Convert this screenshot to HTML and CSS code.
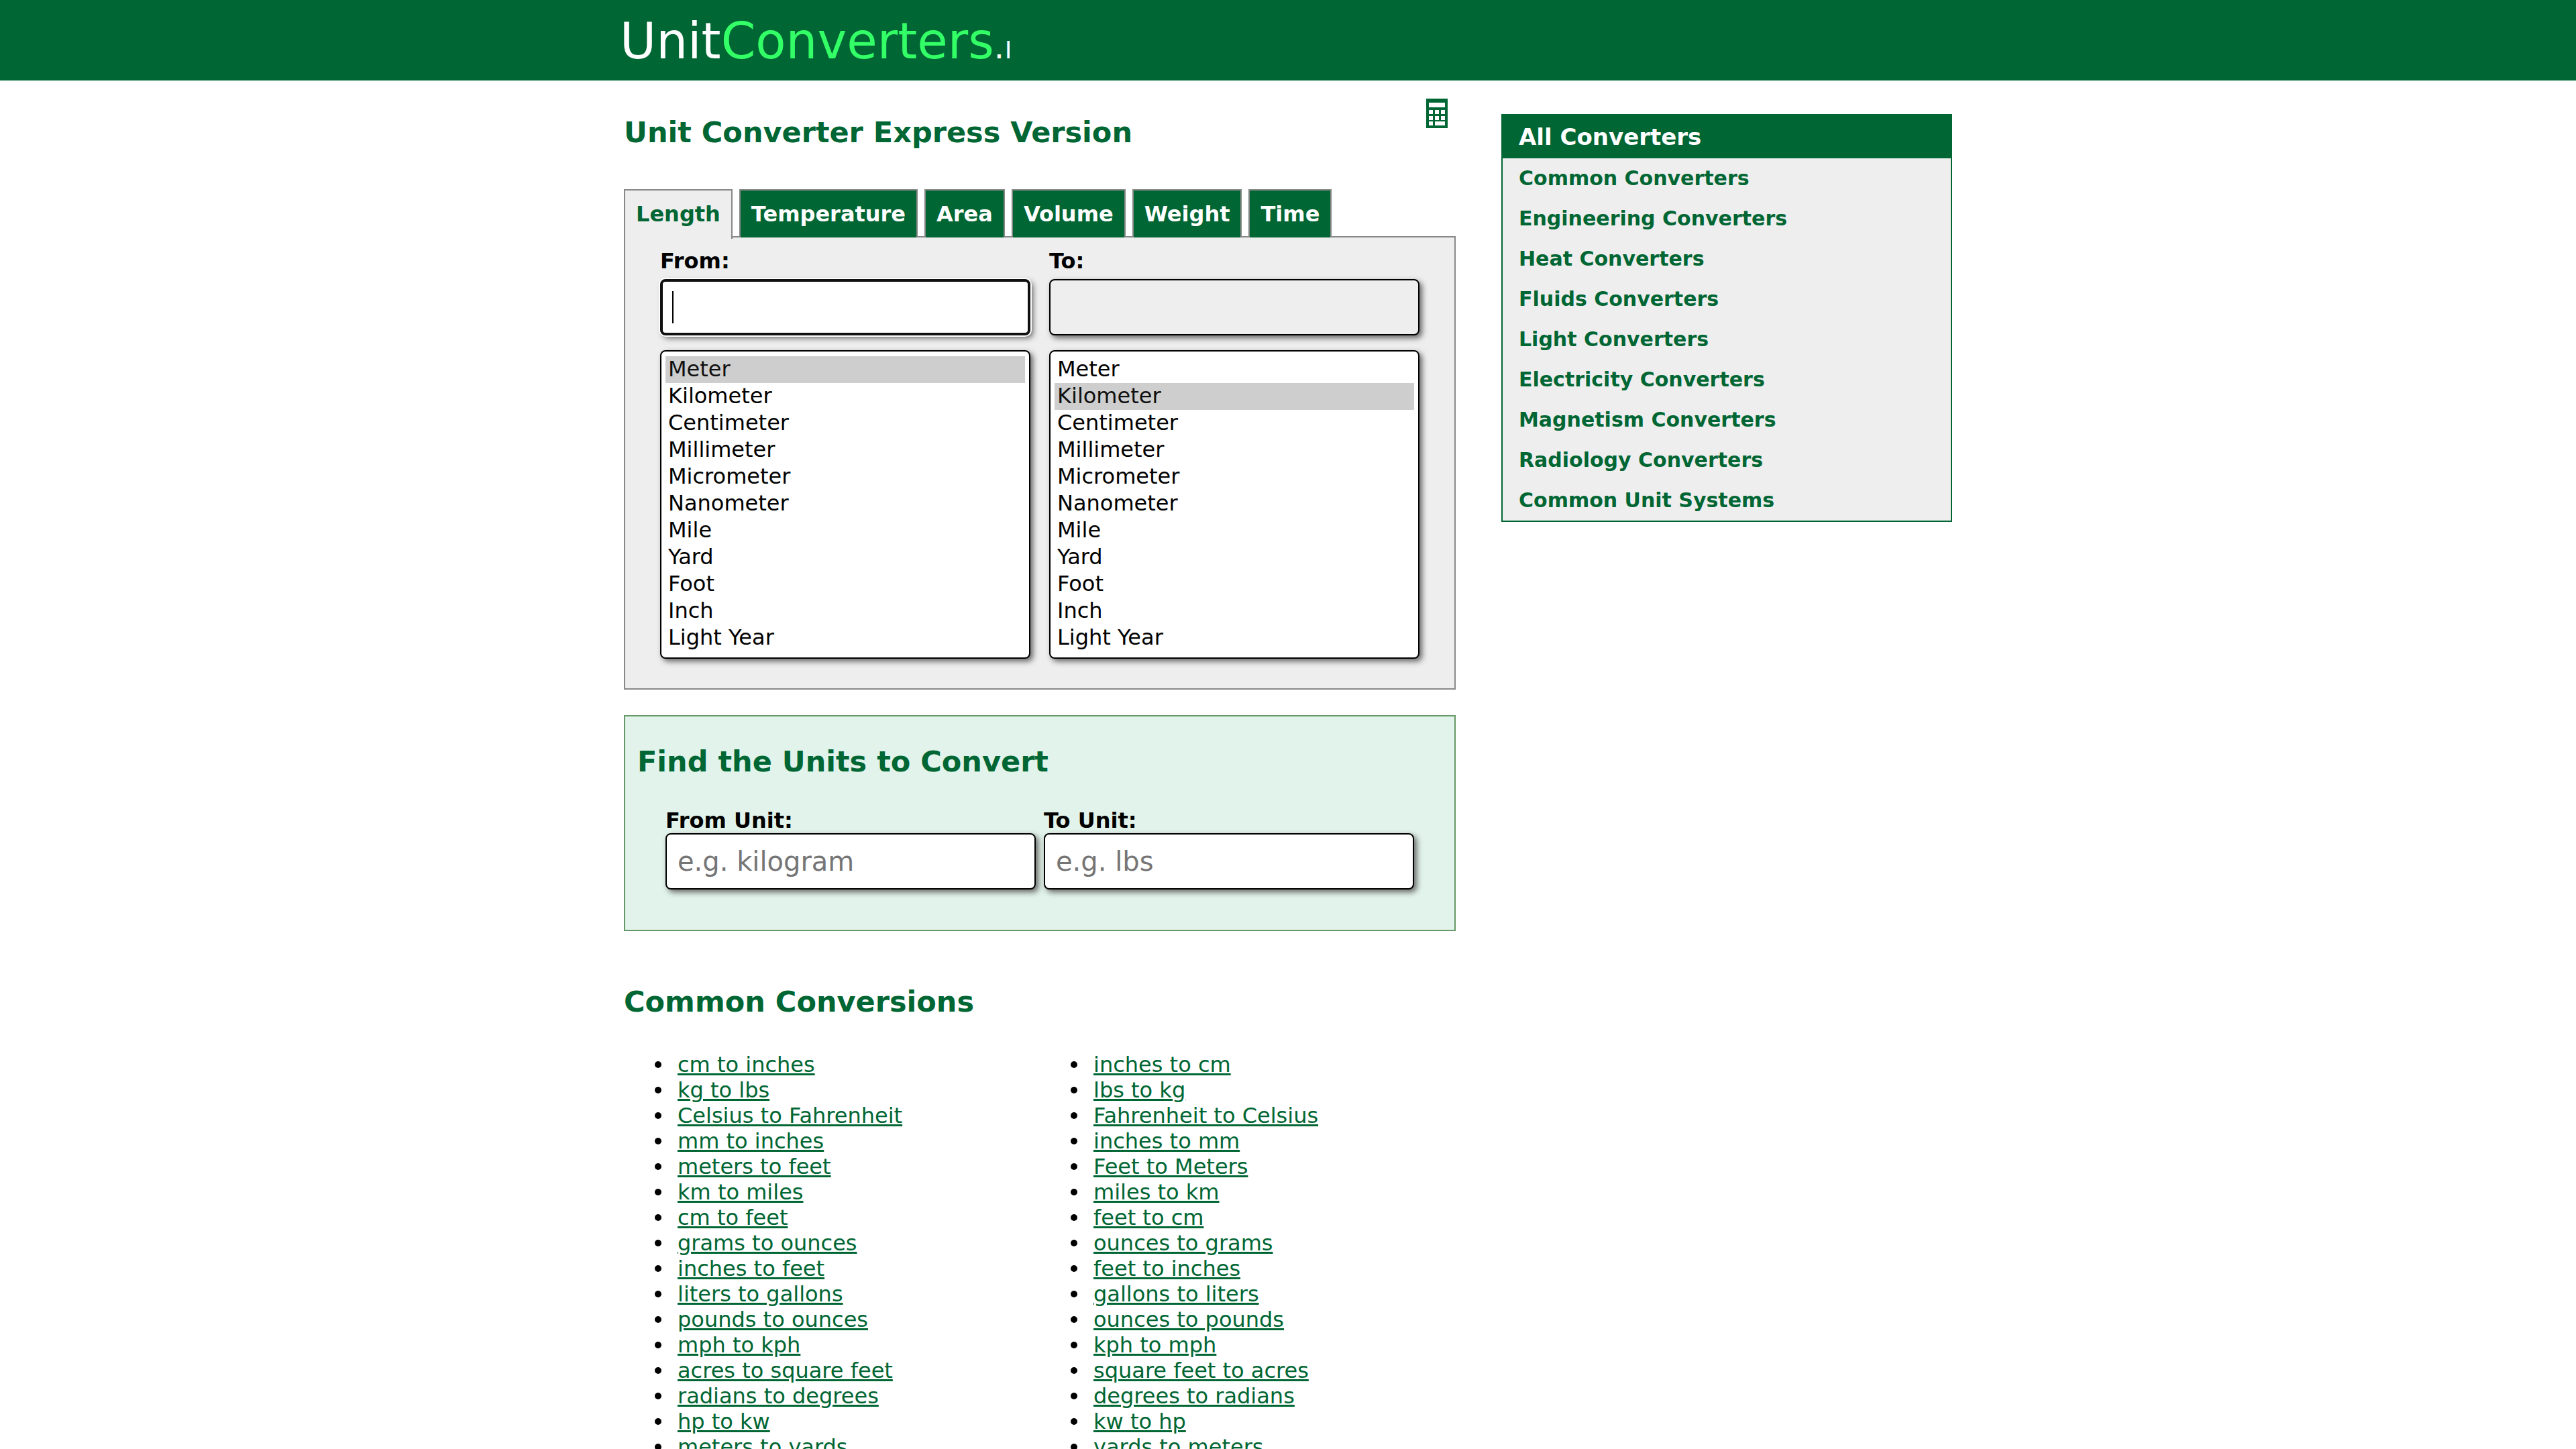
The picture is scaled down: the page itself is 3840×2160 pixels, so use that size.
FILE: index.html
```html
<!DOCTYPE html>
<html lang="en">
<head>
<meta charset="utf-8">
<title>Unit Converter</title>
<link rel="stylesheet" href="styles.css">
</head>
<body>
<header class="site-header">
  <div class="container">
    <a class="logo" href="#">Unit<span class="logo-accent">Converters</span><span class="logo-suffix">.n</span></a>
  </div>
</header>
<div class="container layout">
  <main class="main">
    <div class="title-row">
      <h1 class="heading">Unit Converter Express Version</h1>
      <a class="calc-link" href="#" aria-label="Calculator">
        <svg class="calc-icon" viewBox="0 0 32 44" aria-hidden="true">
          <path fill="#006633" d="M0 0h32v44H0z"/>
          <path fill="#fff" d="M4 6h24v7H4zM4 17h6v6H4zM13 17h6v6h-6zM22 17h6v6h-6zM4 26h6v6H4zM13 26h6v6h-6zM22 26h6v6h-6zM4 34h6v6H4zM13 34h15v6H13z"/>
        </svg>
      </a>
    </div>
    <nav class="tabs">
      <a class="tab tab-active" href="#">Length</a>
      <a class="tab" href="#">Temperature</a>
      <a class="tab" href="#">Area</a>
      <a class="tab" href="#">Volume</a>
      <a class="tab" href="#">Weight</a>
      <a class="tab" href="#">Time</a>
    </nav>
    <form class="converter">
      <div class="field">
        <label class="label" for="from-value">From:</label>
        <input class="box text-box text-box-current" id="from-value" type="text">
        <select class="box unit-list" size="11" aria-label="From unit">
          <option selected>Meter</option><option>Kilometer</option><option>Centimeter</option><option>Millimeter</option><option>Micrometer</option><option>Nanometer</option><option>Mile</option><option>Yard</option><option>Foot</option><option>Inch</option><option>Light Year</option>
        </select>
      </div>
      <div class="field">
        <label class="label" for="to-value">To:</label>
        <input class="box text-box text-box-result" id="to-value" type="text" readonly>
        <select class="box unit-list" size="11" aria-label="To unit">
          <option>Meter</option><option selected>Kilometer</option><option>Centimeter</option><option>Millimeter</option><option>Micrometer</option><option>Nanometer</option><option>Mile</option><option>Yard</option><option>Foot</option><option>Inch</option><option>Light Year</option>
        </select>
      </div>
    </form>
    <section class="finder">
      <h2 class="heading">Find the Units to Convert</h2>
      <form class="finder-form">
        <div class="field">
          <label class="label" for="find-from">From Unit:</label>
          <input class="box text-box" id="find-from" type="text" placeholder="e.g. kilogram">
        </div>
        <div class="field">
          <label class="label" for="find-to">To Unit:</label>
          <input class="box text-box" id="find-to" type="text" placeholder="e.g. lbs">
        </div>
      </form>
    </section>
    <section class="common">
      <h2 class="heading">Common Conversions</h2>
      <div class="link-columns">
        <ul class="link-list">
          <li><a href="#">cm to inches</a></li>
          <li><a href="#">kg to lbs</a></li>
          <li><a href="#">Celsius to Fahrenheit</a></li>
          <li><a href="#">mm to inches</a></li>
          <li><a href="#">meters to feet</a></li>
          <li><a href="#">km to miles</a></li>
          <li><a href="#">cm to feet</a></li>
          <li><a href="#">grams to ounces</a></li>
          <li><a href="#">inches to feet</a></li>
          <li><a href="#">liters to gallons</a></li>
          <li><a href="#">pounds to ounces</a></li>
          <li><a href="#">mph to kph</a></li>
          <li><a href="#">acres to square feet</a></li>
          <li><a href="#">radians to degrees</a></li>
          <li><a href="#">hp to kw</a></li>
          <li><a href="#">meters to yards</a></li>
        </ul>
        <ul class="link-list">
          <li><a href="#">inches to cm</a></li>
          <li><a href="#">lbs to kg</a></li>
          <li><a href="#">Fahrenheit to Celsius</a></li>
          <li><a href="#">inches to mm</a></li>
          <li><a href="#">Feet to Meters</a></li>
          <li><a href="#">miles to km</a></li>
          <li><a href="#">feet to cm</a></li>
          <li><a href="#">ounces to grams</a></li>
          <li><a href="#">feet to inches</a></li>
          <li><a href="#">gallons to liters</a></li>
          <li><a href="#">ounces to pounds</a></li>
          <li><a href="#">kph to mph</a></li>
          <li><a href="#">square feet to acres</a></li>
          <li><a href="#">degrees to radians</a></li>
          <li><a href="#">kw to hp</a></li>
          <li><a href="#">yards to meters</a></li>
        </ul>
      </div>
    </section>
  </main>
  <aside class="sidebar">
    <h2 class="sidebar-title">All Converters</h2>
    <nav class="sidebar-nav">
      <a href="#">Common Converters</a>
      <a href="#">Engineering Converters</a>
      <a href="#">Heat Converters</a>
      <a href="#">Fluids Converters</a>
      <a href="#">Light Converters</a>
      <a href="#">Electricity Converters</a>
      <a href="#">Magnetism Converters</a>
      <a href="#">Radiology Converters</a>
      <a href="#">Common Unit Systems</a>
    </nav>
  </aside>
</div>
</body>
</html>
```
FILE: styles.css
```css
* {
  box-sizing: border-box;
}

html {
  overflow-x: hidden;
  scrollbar-width: none;
}

body {
  margin: 0;
  background: #fff;
  color: #000;
  font-family: "DejaVu Sans", Verdana, sans-serif;
  font-size: 32px;
  line-height: 38px;
}

.container {
  max-width: 1980px;
  margin: 0 auto;
}

.site-header {
  background: #006633;
}

.logo {
  display: block;
  width: 581px;
  margin-left: -6px;
  padding-top: 2px;
  overflow: hidden;
  color: #fff;
  font-size: 74px;
  line-height: 118px;
  text-decoration: none;
  white-space: nowrap;
}

.logo-accent {
  color: #33ff66;
}

.logo-suffix {
  font-size: 48px;
  line-height: 48px;
}

.layout {
  display: grid;
  grid-template-columns: minmax(0, 1240fr) minmax(0, 672fr);
  column-gap: 68px;
  align-items: start;
}

.heading {
  margin: 0;
  color: #006633;
  font-size: 43px;
  line-height: 50px;
}

.title-row {
  display: flex;
  justify-content: space-between;
  align-items: flex-start;
  padding: 27px 12px 60px 0;
}

.title-row .heading {
  padding-top: 25px;
}

.calc-icon {
  display: block;
  width: 32px;
  height: 44px;
}

.tabs {
  display: flex;
  align-items: flex-start;
  gap: 10px;
  margin-bottom: -2px;
}

.tab {
  position: relative;
  padding: 16px;
  border: 2px solid #888;
  border-bottom: 0;
  background: #006633;
  color: #fff;
  font-weight: bold;
  text-decoration: none;
}

.tab-active {
  padding-bottom: 18px;
  margin-bottom: -2px;
  background: #eee;
  color: #006633;
}

.converter {
  display: grid;
  grid-template-columns: 1fr 1fr;
  column-gap: 28px;
  padding: 16px 52px 44px;
  border: 2px solid #888;
  background: #eee;
}

.field {
  display: flex;
  flex-direction: column;
}

.label {
  font-weight: bold;
}

.box {
  width: 100%;
  border: 2px solid #000;
  border-radius: 8px;
  background: #fff;
  box-shadow: 4px 4px 8px #666;
  color: #000;
  font-family: inherit;
}

.text-box {
  height: 84px;
  padding: 0 16px;
  font-size: 40px;
}

.text-box::placeholder {
  color: #757575;
}

/* The active field shows a two-tone ring and an insertion bar. */
.text-box-current {
  border: 4px solid #101010;
  background: #fff linear-gradient(#000, #000) 14px 14px / 2px 48px no-repeat;
  box-shadow: 0 0 0 2px #fff, 4px 4px 8px #666;
}

.text-box-result {
  background: #eee;
}

.converter .text-box {
  margin: 8px 0 22px;
}

.unit-list {
  height: 460px;
  padding: 7px 6px;
  overflow: hidden;
  scrollbar-width: none;
  font-size: 32px;
}

.unit-list option {
  min-height: 40px;
  padding: 0 4px 2px;
}

.finder {
  margin-top: 38px;
  padding: 42px 22px 60px 18px;
  border: 2px solid #669966;
  background: #e1f3ea;
}

.finder-form {
  display: grid;
  grid-template-columns: 1fr 1fr;
  column-gap: 12px;
  padding: 44px 38px 0 42px;
}

.common {
  margin-top: 80px;
}

.link-columns {
  display: grid;
  grid-template-columns: 1fr 1fr;
  margin-top: 50px;
}

.link-list {
  margin: 0;
  padding-left: 46px;
  list-style: none;
}

.link-list li {
  display: flex;
  align-items: center;
  gap: 24px;
}

.link-list li::before {
  content: "";
  width: 10px;
  height: 10px;
  border-radius: 50%;
  background: #000;
}

.link-list a {
  color: #006633;
}

.sidebar {
  margin-top: 50px;
  border: 2px solid #006633;
  background: #eee;
}

.sidebar-title {
  margin: 0;
  padding: 0 24px;
  background: #006633;
  color: #fff;
  font-size: 34px;
  line-height: 64px;
}

.sidebar-nav {
  display: flex;
  flex-direction: column;
  padding: 0 24px;
}

.sidebar-nav a {
  color: #006633;
  font-size: 30px;
  font-weight: bold;
  line-height: 60px;
  text-decoration: none;
}
```
